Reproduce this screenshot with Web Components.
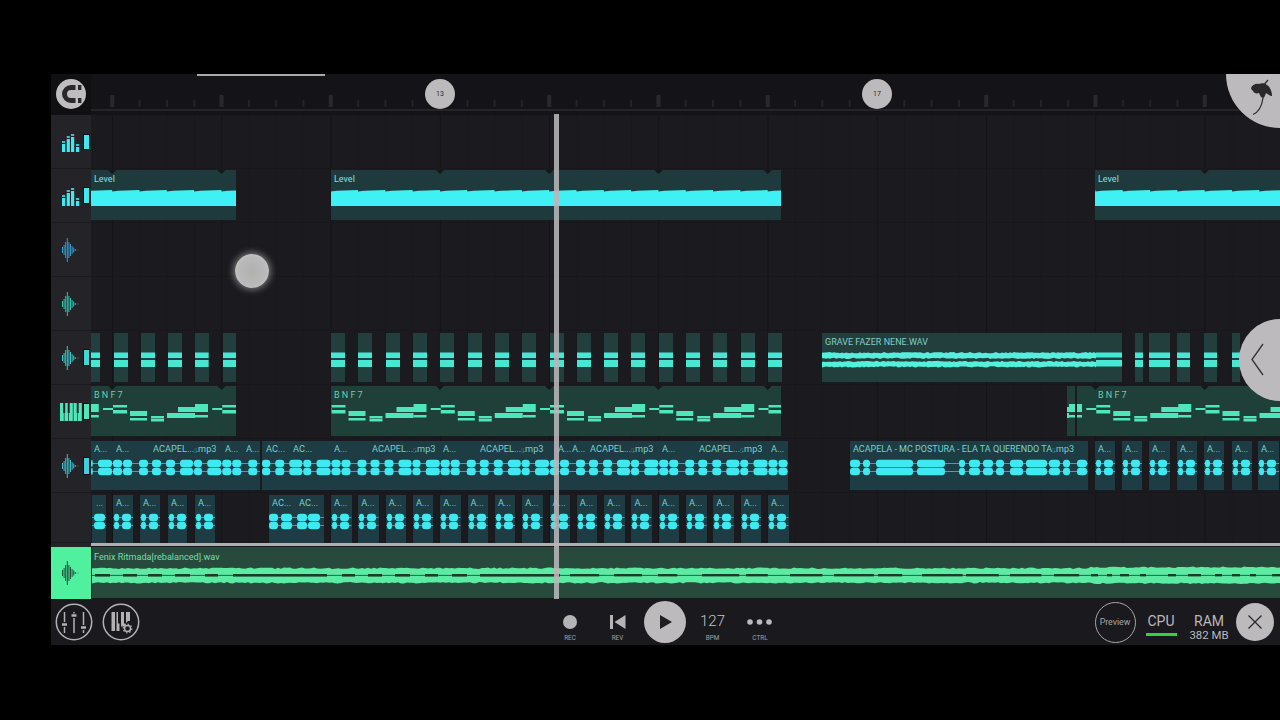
<!DOCTYPE html>
<html><head><meta charset="utf-8"><title>FL Studio Mobile</title>
<style>html,body{margin:0;padding:0;background:#000;height:100%;overflow:hidden;font-family:Roboto,"Liberation Sans",sans-serif}</style>
</head><body>
<fl-app></fl-app>
<script>
const BAR=109.25, BEAT=BAR/4, B0=112.25;
const rnd=i=>{const s=Math.sin(i*12.9898+3.1)*43758.5453;return s-Math.floor(s)};
const CY='#3fe9f2', TL='#46e8d4', NG='#4fe6bb', MG='#5ceba3';

function iconSvg(kind,c){
  if(kind==='eq'){
    const bars=[[2,11],[6.7,16],[11,18],[16,8]];
    let s='';
    bars.forEach(([x,h])=>{s+=`<rect x="${x}" y="${21-h+3}" width="3.2" height="${h-3}" fill="${c}"/><rect x="${x}" y="${21-h}" width="3.2" height="2" fill="${c}" opacity=".8"/>`});
    return `<svg width="22" height="22" viewBox="0 0 22 22">${s}</svg>`;
  }
  if(kind==='piano'){
    let s='';[0,4.5,9,13.5,18].forEach(x=>{s+=`<rect x="${x}" y="1" width="3.8" height="18" fill="${c}"/>`});
    [3.2,7.7,16.7].forEach(x=>{s+=`<rect x="${x}" y="1" width="2" height="10" fill="#242327"/>`});
    return `<svg width="22" height="20" viewBox="0 0 22 20">${s}</svg>`;
  }
  if(kind==='wave'){
    const h=[6,10,16,24,16,12,8,5,2];let s='';
    h.forEach((v,i)=>{const x=2.5+i*1.6;s+=`<line x1="${x}" x2="${x}" y1="${13-v/2}" y2="${13+v/2}" stroke="${c}" stroke-width=".9"/>`});
    s+=`<rect x="17.5" y="12.5" width="1" height="1" fill="${c}" opacity=".6"/>`;
    return `<svg width="22" height="26" viewBox="0 0 22 26">${s}</svg>`;
  }
  return '';
}

class FlTrackHeader extends HTMLElement{
  connectedCallback(){
    const a=n=>this.getAttribute(n);
    const c=a('color')||CY, m=a('meter');
    const root=this.attachShadow({mode:'open'});
    root.innerHTML=`<style>
      :host{display:flex;align-items:center;box-sizing:border-box;width:40px;flex:none;padding-left:9px;background:${a('bg')||'#242327'};border-bottom:1px solid #1b1a1e;gap:2px}
      svg{display:block}
      .i{width:22px;display:flex;justify-content:flex-start}
      .m{width:5px;height:${m||0}px;background:${a('mcolor')||c};outline:1px solid #111}
    </style><div class="i">${iconSvg(a('icon'),c)}</div>${m?'<div class="m"></div>':''}`;
  }
}

class FlClip extends HTMLElement{
  connectedCallback(){
    const a=n=>this.getAttribute(n);
    const s=+a('start'), e=+a('end'), top=+a('top'), h=+a('h'), kind=a('kind');
    const w=e-s;
    const labels=JSON.parse(a('labels')||'[]');
    const root=this.attachShadow({mode:'open'});
    const lab=labels.map(([x,t])=>`<span style="left:${x-s}px">${t.replace('▯','<i>▯</i>')}</span>`).join('');
    root.innerHTML=`<style>
      :host{position:absolute;left:${s-91}px;top:${top}px;width:${w}px;height:${h}px;background:${a('bg')};display:block;overflow:hidden}
      svg{position:absolute;left:0;top:0;display:block}
      span{position:absolute;top:${a('ltop')||3}px;font:${a('lfont')||'9.2px/12px Roboto,sans-serif'};color:${a('lcolor')||'#7fd9d6'};white-space:nowrap;letter-spacing:${a('ls')||0};opacity:.95}
      i{font-style:normal;opacity:.5;font-size:6px;line-height:1;letter-spacing:-1.5px}
    </style><svg width="${w}" height="${h}" viewBox="${s} 0 ${w} ${h}">${FlClip.draw(kind,s,e,h,this)}</svg>${lab}`;
  }
  static notches(s,e){let o='';for(let k=0;k<12;k++){const x=B0+BAR*k;if(x>s+5&&x<e-5)o+=`<path d="M${x-4} 0h8l-4 4z" fill="#15171a"/>`}return o}
  static draw(kind,s,e,h,el){
    let o='';
    if(kind==='level'){
      let k=Math.floor((s-B0)/BEAT)-1;
      let pts=[];for(;B0+k*BEAT<e+BEAT;k++){const b=B0+k*BEAT;pts.push(`${b},21.6`,`${b+6},20.8`,`${b+BEAT-0.2},20`)}
      o=`<path d="M${s} 36 L${s} 21.500 L${pts.join(' L')} L${e} 36 Z" fill="#3ff0f5"/>`+FlClip.notches(s,e);
      return `<defs><clipPath id="c"><rect x="${s}" y="0" width="${e-s}" height="${h}"/></clipPath></defs><g clip-path="url(#c)">${o}</g>`;
    }
    if(kind==='bars'){
      return `<rect x="${s}" y="19.5" width="${e-s}" height="5.5" fill="${TL}"/><rect x="${s}" y="27" width="${e-s}" height="7" fill="${TL}"/>`;
    }
    if(kind==='grave'){
      const G='#55f0dc';
      let top1=[],bot1=[],top2=[],bot2=[];
      for(let x=s,i=0;x<=1096;x+=2,i++){
        top1.push(`${x},${19+rnd(i)*1.3}`);bot1.unshift(`${x},${26-rnd(i+300)*1.3}`);
        top2.push(`${x},${27.8+rnd(i+600)*1.3}`);bot2.unshift(`${x},${34.6-rnd(i+900)*1.3}`);
      }
      o+=`<polygon points="${top1.concat(bot1).join(' ')}" fill="${G}"/><polygon points="${top2.concat(bot2).join(' ')}" fill="${G}"/>`;
      o+=`<rect x="1096" y="19.5" width="${e-1096}" height="5" fill="${TL}"/><rect x="1096" y="27" width="${e-1096}" height="6.5" fill="${TL}"/>`;
      return o;
    }
    if(kind==='notes'){
      const P=[[0,10,22,2],[10,24,19,2.5],[10,24,24,3.5],[27,44,25,5],[27,44,32,2.5],[48,61,30,2.5],[48,61,33,2.5],[64,92,27,5],[75,105,21,5],[92,105,18,3],[92,105,29,2.5]];
      for(let k=-1;k<11;k++){const b=103+BAR*k;P.forEach(([a,z,y,t])=>{if(b+z>s&&b+a<e)o+=`<rect x="${b+a}" y="${y}" width="${z-a}" height="${t}" fill="${NG}"/>`})}
      return `<defs><clipPath id="c"><rect x="${s}" y="0" width="${e-s}" height="${h}"/></clipPath></defs><g clip-path="url(#c)">${o}</g>`+FlClip.notches(s,e);
    }
    if(kind==='vocal'||kind==='vocal2'||kind==='short'){
      let blobs=[];
      if(kind==='vocal'){
        const P=[[0,14],[15,24],[25,34],[41,50],[54,63],[68,77],[82,95],[96,104]];
        for(let k=-1;k<8;k++){const b=98+BAR*k;P.forEach(([a,z])=>{if(b+z>s&&b+a<e)blobs.push([Math.max(b+a,s),Math.min(b+z,e)])})}
      }else if(kind==='vocal2'){
        blobs=[[850,860],[863,870],[876,913],[917,945],[959,965],[969,980],[983,993],[996,1004],[1010,1023],[1026,1047],[1049,1060],[1063,1070],[1077,1087]];
      }else{
        blobs=JSON.parse(el.getAttribute('blobs')||'null')||[[s+1,s+6],[s+9,s+18]];
      }
      [22.5,30.5].forEach(cy=>{
        o+=`<rect x="${s}" y="${cy-.4}" width="${e-s}" height=".8" fill="${CY}" opacity=".8"/>`;
        blobs.forEach(([a,z])=>{o+=`<rect x="${a}" y="${cy-3.7}" width="${z-a}" height="7.4" rx="3.2" fill="${CY}"/>`});
      });
      return o;
    }
    return o;
  }
}

class FlMasterWave extends HTMLElement{
  connectedCallback(){
    const root=this.attachShadow({mode:'open'});
    const W=1188,X0=92;let top=[],bot=[];
    for(let x=X0,i=0;x<=1280;x+=3,i++){const big=x>1090;
      top.push(`${x},${(big?19.5:20.5)+rnd(i)*1.4}`);bot.unshift(`${x},${(big?37:36.5)-rnd(i+900)*1.4}`)}
    let segs='';const D='#1d3a30';
    [[95,110],[123,137],[148,162],[175,190],[205,218],[233,327],[342,355],[368,382],[395,410],[425,438],[452,467],[480,560]].forEach(([a,z])=>{segs+=`<rect x="${a}" y="27" width="${z-a}" height="2.6" fill="${D}"/>`});
    for(let x=570;x<1090;x+=44){const l=18+rnd(x)*24;segs+=`<rect x="${x}" y="27" width="${l}" height="2.4" fill="${D}"/>`}
    [[1091,1098],[1107,1112],[1120,1129],[1140,1146],[1168,1176],[1188,1201],[1215,1222],[1232,1240],[1250,1256],[1272,1280]].forEach(([a,z])=>{segs+=`<rect x="${a}" y="27" width="${z-a}" height="2.4" fill="${D}"/>`});
    root.innerHTML=`<style>:host{display:block;flex:1;position:relative;background:#274a3d;overflow:hidden;margin-left:1px;margin-bottom:1px}
      svg{display:block}
      span{position:absolute;left:2px;top:4px;font:9.1px/12px Roboto,sans-serif;color:#74dcab;white-space:nowrap}</style>
      <svg width="${W}" height="52" viewBox="${X0} 0 ${W} 52"><polygon points="${top.concat(bot).join(' ')}" fill="${MG}"/>${segs}<rect x="${X0}" y="27.9" width="${W}" height=".8" fill="${D}"/></svg><span>Fenix Ritmada[rebalanced].wav</span>`;
  }
}

class FlTrack extends HTMLElement{
  constructor(){super();
    const root=this.attachShadow({mode:'open'});
    root.innerHTML=`<style>
      :host{display:flex;height:54px;flex:none;box-sizing:border-box}
      :host([short]){height:50px}
      ::slotted([slot=head]){height:100%}
      .lane{flex:1;position:relative;overflow:hidden;border-bottom:1px solid #18171b;
        background-color:#1b1a1e;
        background-image:linear-gradient(90deg,#141317 1px,transparent 1px),linear-gradient(90deg,#18171b 1px,transparent 1px);
        background-size:${BAR}px 100%,${BEAT}px 100%;background-position:21px 0,21px 0}
      :host([short]) .lane{border-bottom:0}
    </style><slot name="head"></slot><div class="lane"><slot></slot></div>`;
  }
}

class FlRuler extends HTMLElement{
  constructor(){super();
    const root=this.attachShadow({mode:'open'});
    let t='';
    for(let k=0;k<48;k++){const x=B0+k*BEAT;const maj=k%4===0;
      if(x>1226)continue;
      t+= maj?`<rect x="${x-2}" y="95" width="4" height="12" fill="#29282c"/>`:`<rect x="${x-1}" y="100" width="2" height="7" fill="#242327"/>`}
    root.innerHTML=`<style>
      :host{display:flex;height:41px;flex:none;position:relative;background:#141317;z-index:4}
      .snap{width:40px;flex:none;background:#100f12;display:flex;align-items:center;justify-content:center;padding-bottom:1px;box-sizing:border-box}
      .tl{flex:1;position:relative}
      .tl svg.t{position:absolute;left:0;top:0}
      .line{position:absolute;left:0;right:0;top:35px;height:2px;background:#252428}
      .bub{position:absolute;top:5px;width:30px;height:30px;border-radius:50%;background:#bdbabd;display:flex;align-items:center;justify-content:center;font:7px Roboto,sans-serif;color:#2c2b2f}
      .logo{position:absolute;right:0;top:0;z-index:3}
      .scroll{position:absolute;left:106px;top:0;width:128px;height:2px;background:#aaa8aa}
    </style>
    <div class="snap"><svg width="32" height="32" viewBox="0 0 32 32"><circle cx="16" cy="16" r="15" fill="#c0bdc0"/><path d="M20.500 9.500h-4.500a6.500 6.500 0 0 0 0 13h4.500" fill="none" stroke="#29282c" stroke-width="5"/><rect x="23" y="7" width="3.4" height="5" fill="#29282c"/><rect x="23" y="20" width="3.4" height="5" fill="#29282c"/></svg></div>
    <div class="tl">
      <svg class="t" width="1189" height="41" viewBox="91 74 1189 41">${t}</svg>
      <div class="line"></div>
      <div class="scroll"></div>
      <div class="bub" style="left:334px">13</div>
      <div class="bub" style="left:771px">17</div>
      <svg class="logo" width="54" height="54" viewBox="1226 74 54 54"><circle cx="1280" cy="74" r="54" fill="#bdbabd"/>
        <path d="M1251 88c1-3 5-5 8-4 2-1 6-1 8 1 3 2 5 6 5 11-2 0-4-2-6-3-1 3-2 5-3 5-2 0-3-3-4-5-3 1-5 0-6-2-1-1-2-2-2-3z" fill="#29282c"/>
        <path d="M1262 87l6-7" stroke="#29282c" stroke-width="1.2" fill="none"/>
        <path d="M1263 98c-1 7-4 14-10 16.500" stroke="#29282c" stroke-width="1.2" fill="none"/></svg>
    </div>`;
  }
}

class FlTransport extends HTMLElement{
  constructor(){super();
    const root=this.attachShadow({mode:'open'});
    root.innerHTML=`<style>
      :host{display:flex;height:46px;flex:none;align-items:center;background:#1a191d;color:#bdbabd;font-family:Roboto,sans-serif;position:relative}
      svg{display:block}
      .left{display:flex;gap:9px;padding-left:4px;width:495.250px;box-sizing:border-box}
      .mid{display:flex;align-items:center}
      .slot{width:47.500px;height:46px;display:flex;flex-direction:column;align-items:center;position:relative}
      .slot .g{height:46px;display:flex;align-items:center;justify-content:center}
      .slot small{position:absolute;left:0;right:0;text-align:center;bottom:3px;font-size:6.4px;line-height:8px;color:#a3a1a3}
      .bpm{font-size:15px;font-weight:300;color:#c6c4c6;padding-bottom:2px;box-sizing:border-box}
      .play{width:47.500px;display:flex;justify-content:center}
      .right{margin-left:auto;display:flex;align-items:center}
      .prev{border:1.500px solid #a8a6a8;border-radius:50%;display:flex;align-items:center;justify-content:center;font-size:8.800px;color:#a8a6a8;width:39px;height:39px;margin-right:10px}
      .cpu{width:31px;text-align:center;font-size:14px;line-height:16px;margin-right:12.500px;color:#bab8ba;margin-top:5px}
      .cpu b{display:block;height:3px;background:#36d23c;margin-top:4px}
      .ram{width:40px;text-align:center;font-size:14px;line-height:15px;margin-right:7px;color:#bab8ba;margin-top:10px}
      .ram div{font-size:11.400px;line-height:12px}
      .x{margin-right:6px}
    </style>
    <div class="left">
      <svg width="38" height="38" viewBox="0 0 38 38"><circle cx="19" cy="19" r="17.700" fill="none" stroke="#b3b1b3" stroke-width="1.500"/>
        <g stroke="#b3b1b3" stroke-width="1.500" fill="none"><path d="M9.500 9v10M9.500 24v6M19 9v1.500M19 15v15M28.500 9v13M28.500 27v3"/><path d="M7 21.500h5M16.500 12.500h5M26 24.500h5" stroke-width="2.500"/></g></svg>
      <svg width="38" height="38" viewBox="0 0 38 38"><circle cx="19" cy="19" r="17.700" fill="none" stroke="#b3b1b3" stroke-width="1.500"/>
        <path d="M9.500 9h3.500v19H9.500zM14.500 9h1.500v11.500h1.500V28h-3zM20 9h2v11.500h1.500v3H19V9zM24 9h4v9h-2l-2 2z" fill="#b3b1b3"/>
        <circle cx="25.500" cy="25.500" r="3" fill="none" stroke="#b3b1b3" stroke-width="1.500"/><circle cx="25.500" cy="25.500" r="4.300" fill="none" stroke="#b3b1b3" stroke-width="1.200" stroke-dasharray="1.500 1.800"/></svg>
    </div>
    <div class="mid">
      <div class="slot"><div class="g"><svg width="14" height="14"><circle cx="7" cy="7" r="7" fill="#b6b3b6"/></svg></div><small>REC</small></div>
      <div class="slot"><div class="g"><svg width="16" height="14" viewBox="0 0 16 14"><rect x="0" y="0" width="3" height="14" fill="#b6b3b6"/><path d="M4.500 7L15.500 0v14z" fill="#b6b3b6"/></svg></div><small>REV</small></div>
      <div class="play"><svg width="42" height="42" viewBox="0 0 42 42"><circle cx="21" cy="21" r="21" fill="#bdbabd"/><path d="M16 14v14l12-7z" fill="#1f1e22"/></svg></div>
      <div class="slot"><div class="g bpm">127</div><small>BPM</small></div>
      <div class="slot"><div class="g"><svg width="26" height="6" viewBox="0 0 26 6"><circle cx="3" cy="3" r="2.800" fill="#bdbabd"/><circle cx="12.500" cy="3" r="2.800" fill="#bdbabd"/><circle cx="22" cy="3" r="2.800" fill="#bdbabd"/></svg></div><small>CTRL</small></div>
    </div>
    <div class="right">
      <div class="prev">Preview</div>
      <div class="cpu">CPU<b></b></div>
      <div class="ram">RAM<div>382 MB</div></div>
      <svg class="x" width="38" height="38" viewBox="0 0 38 38"><circle cx="19" cy="19" r="19" fill="#bdbabd"/><path d="M12.500 12.500l13 13M25.500 12.500l-13 13" stroke="#2a292d" stroke-width="1.300"/></svg>
    </div>`;
  }
}

class FlApp extends HTMLElement{
  constructor(){super();
    const root=this.attachShadow({mode:'open'});
    const beats=(from,n,w)=>Array.from({length:n},(_,i)=>[from+i*BEAT,from+i*BEAT+w]);
    const clip=(o)=>{const p=Object.entries(o).map(([k,v])=>`${k}='${typeof v==='object'?JSON.stringify(v):v}'`).join(' ');return `<fl-clip ${p}></fl-clip>`};
    const head=(icon,color,meter,extra='')=>`<fl-track-header slot="head" icon="${icon}" color="${color}" ${meter?`meter="${meter}"`:''} ${extra}></fl-track-header>`;

    const LV='#1f3a3d', BR='#223f3e', NT='#1f4039', VC='#1e3c44';
    const level=[[91,236],[331,781],[1095,1280]].map(([s,e])=>clip({start:s,end:e,top:1,h:50,kind:'level',bg:LV,labels:[[s+3,'Level']],lfont:'9px/12px Roboto,sans-serif',lcolor:'#86ebe6'})).join('');

    const barsR=[[91,100],...beats(113.5,1,14),[140.8,155],[168,182],[195.4,209],[222.5,236],...beats(331,17,14)];
    const barsT=[[1135,1143],[1149,1170],[1177,1190],[1204,1217],[1232,1240]];
    const row5=[...barsR,...barsT].map(([s,e])=>clip({start:s,end:e,top:2,h:49,kind:'bars',bg:BR})).join('')
      +clip({start:822,end:1122,top:2,h:49,kind:'grave',bg:BR,labels:[[825,'GRAVE FAZER NENE.WAV']],lfont:'9px/12px Roboto,sans-serif',lcolor:'#84d8cf'});

    const notes=[[91,236,'BNF7',94],[331,781,'BNF7',334],[1067,1075,'',0],[1077,1280,'BNF7',1098]].map(([s,e,t,x])=>clip({start:s,end:e,top:1,h:50,kind:'notes',bg:NT,labels:t?[[x,t]]:[],ls:'2.2px',lfont:'9px/12px Roboto,sans-serif',lcolor:'#72d6b6',ltop:3})).join('');

    const A='A...',AC='ACAPEL...▯.mp3';
    const vocal=clip({start:91,end:260,top:2,h:49,kind:'vocal',bg:VC,labels:[[94,A],[116,A],[153,AC],[225,A],[246,A]],ltop:2})
      +clip({start:262,end:788,top:2,h:49,kind:'vocal',bg:VC,labels:[[266,'AC...'],[293,'AC...'],[334,A],[372,AC],[443,A],[480,AC],[558,A],[572,A],[590,AC],[662,A],[699,AC],[771,A]],ltop:2})
      +clip({start:850,end:1088,top:2,h:49,kind:'vocal2',bg:VC,labels:[[853,'ACAPELA - MC POSTURA - ELA TA QUERENDO TA▯.mp3']],ltop:2,lfont:'9px/12px Roboto,sans-serif'})
      +[[1095,1115],[1122,1142],[1149,1170],[1177,1197],[1204,1224],[1232,1252],[1258,1279]].map(([s,e])=>clip({start:s,end:e,top:2,h:49,kind:'short',bg:VC,labels:[[s+3,A]],ltop:2})).join('');

    const row8=clip({start:92,end:106,top:2,h:48,kind:'short',bg:VC,blobs:[[94,105]],labels:[[96,'...']],ltop:2})
      +[[113,133],[140,160],[168,187],[195,215]].map(([s,e])=>clip({start:s,end:e,top:2,h:48,kind:'short',bg:VC,labels:[[s+3,A]],ltop:2})).join('')
      +clip({start:269,end:324,top:2,h:48,kind:'short',bg:VC,blobs:[[269,278],[281,292],[297,307],[308,320]],labels:[[272,'AC...'],[299,'AC...']],ltop:2})
      +beats(331,17,20.5).map(([s,e])=>clip({start:s,end:e,top:2,h:48,kind:'short',bg:VC,labels:[[s+3,A]],ltop:2})).join('');

    root.innerHTML=`<style>
      :host{display:flex;flex-direction:column;position:absolute;left:51px;top:74px;width:1229px;height:571px;background:#1a191d;overflow:hidden}
      .divider{height:4px;flex:none;display:flex}
      .divider i{width:40px;background:#242327}
      .divider b{flex:1;height:3px;background:#b0aeb0}
      .master{display:flex;height:52px;flex:none}
      .mhead{width:40px;flex:none;background:#4ff09e;display:flex;align-items:center;justify-content:flex-start;padding-left:9px;box-sizing:border-box}
      .playhead{position:absolute;left:503px;top:40px;width:4.500px;height:485px;background:#b8b6b8;opacity:.88;z-index:5}
      .touch{position:absolute;left:184px;top:180px;width:34px;height:34px;border-radius:50%;z-index:6;background:radial-gradient(circle,#b0b0b0 0,#bababa 60%,#d8d8da 100%);box-shadow:0 0 6px 2px rgba(200,200,205,.5)}
      .side{position:absolute;left:1188px;top:245px;width:82px;height:82px;border-radius:50%;background:#bdbabd;z-index:6}
      .side svg{display:block;margin:0}
    </style>
    <fl-ruler></fl-ruler>
    <fl-track>${head('eq',CY,14)}</fl-track>
    <fl-track>${head('eq',CY,15)}${level}</fl-track>
    <fl-track>${head('wave','#38a9dc',0)}</fl-track>
    <fl-track>${head('wave','#2fd8c0',0)}</fl-track>
    <fl-track>${head('wave','#3fd8d8',15)}${row5}</fl-track>
    <fl-track>${head('piano',NG,15)}${notes}</fl-track>
    <fl-track>${head('wave','#3fd0e0',16)}${vocal}</fl-track>
    <fl-track short>${head('', CY,0)}${row8}</fl-track>
    <div class="divider"><i></i><b></b></div>
    <div class="master"><div class="mhead">${iconSvg('wave','#1e3b30')}</div><fl-master-wave></fl-master-wave></div>
    <fl-transport></fl-transport>
    <div class="playhead"></div>
    <div class="touch"></div>
    <div class="side"><svg width="82" height="82" viewBox="1239 319 82 82"><path d="M1263 344l-11 15.500 11 15.500" fill="none" stroke="#333236" stroke-width="1.300"/></svg></div>`;
  }
}

customElements.define('fl-track-header',FlTrackHeader);
customElements.define('fl-clip',FlClip);
customElements.define('fl-master-wave',FlMasterWave);
customElements.define('fl-track',FlTrack);
customElements.define('fl-ruler',FlRuler);
customElements.define('fl-transport',FlTransport);
customElements.define('fl-app',FlApp);
</script>
</body></html>
